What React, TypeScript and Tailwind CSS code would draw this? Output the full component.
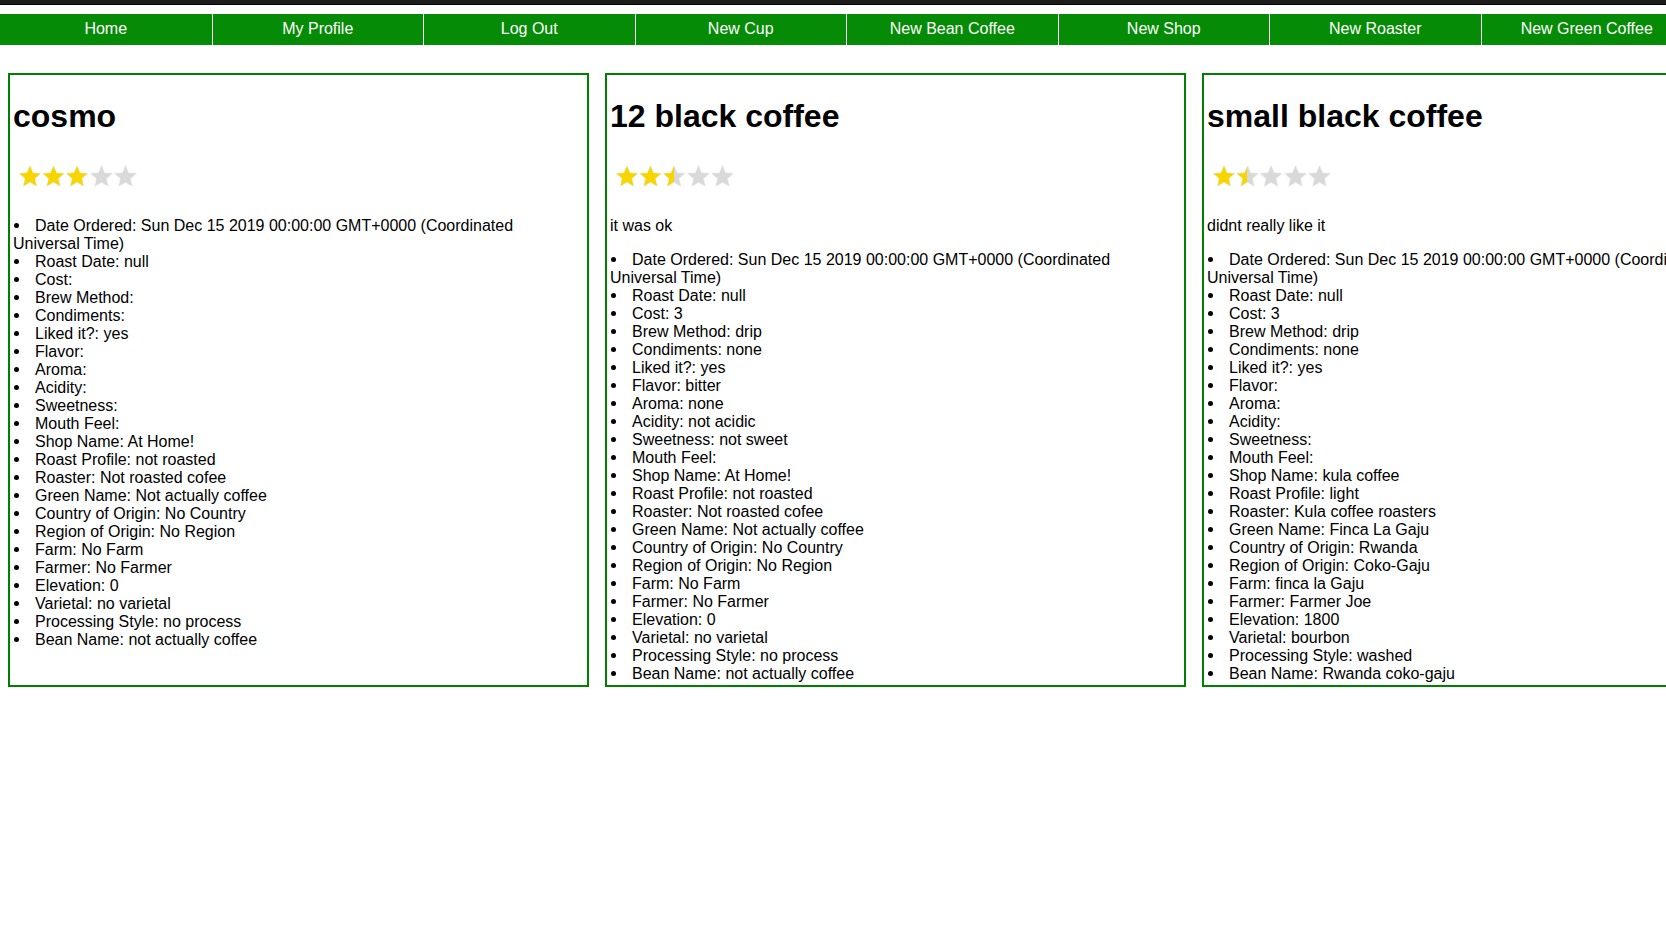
import { useId } from 'react';

type Cup = {
  title: string;
  rating: number;
  notes: string;
  details: string[];
};

const dateOrdered = 'Date Ordered: Sun Dec 15 2019 00:00:00 GMT+0000 (Coordinated Universal Time)';

const cups: Cup[] = [
  {
    title: 'cosmo',
    rating: 3,
    notes: '',
    details: [
      dateOrdered,
      'Roast Date: null',
      'Cost:',
      'Brew Method:',
      'Condiments:',
      'Liked it?: yes',
      'Flavor:',
      'Aroma:',
      'Acidity:',
      'Sweetness:',
      'Mouth Feel:',
      'Shop Name: At Home!',
      'Roast Profile: not roasted',
      'Roaster: Not roasted cofee',
      'Green Name: Not actually coffee',
      'Country of Origin: No Country',
      'Region of Origin: No Region',
      'Farm: No Farm',
      'Farmer: No Farmer',
      'Elevation: 0',
      'Varietal: no varietal',
      'Processing Style: no process',
      'Bean Name: not actually coffee',
    ],
  },
  {
    title: '12 black coffee',
    rating: 2.5,
    notes: 'it was ok',
    details: [
      dateOrdered,
      'Roast Date: null',
      'Cost: 3',
      'Brew Method: drip',
      'Condiments: none',
      'Liked it?: yes',
      'Flavor: bitter',
      'Aroma: none',
      'Acidity: not acidic',
      'Sweetness: not sweet',
      'Mouth Feel:',
      'Shop Name: At Home!',
      'Roast Profile: not roasted',
      'Roaster: Not roasted cofee',
      'Green Name: Not actually coffee',
      'Country of Origin: No Country',
      'Region of Origin: No Region',
      'Farm: No Farm',
      'Farmer: No Farmer',
      'Elevation: 0',
      'Varietal: no varietal',
      'Processing Style: no process',
      'Bean Name: not actually coffee',
    ],
  },
  {
    title: 'small black coffee',
    rating: 1.5,
    notes: 'didnt really like it',
    details: [
      dateOrdered,
      'Roast Date: null',
      'Cost: 3',
      'Brew Method: drip',
      'Condiments: none',
      'Liked it?: yes',
      'Flavor:',
      'Aroma:',
      'Acidity:',
      'Sweetness:',
      'Mouth Feel:',
      'Shop Name: kula coffee',
      'Roast Profile: light',
      'Roaster: Kula coffee roasters',
      'Green Name: Finca La Gaju',
      'Country of Origin: Rwanda',
      'Region of Origin: Coko-Gaju',
      'Farm: finca la Gaju',
      'Farmer: Farmer Joe',
      'Elevation: 1800',
      'Varietal: bourbon',
      'Processing Style: washed',
      'Bean Name: Rwanda coko-gaju',
    ],
  },
];

const navLinks = ['Home', 'My Profile', 'Log Out', 'New Cup', 'New Bean Coffee', 'New Shop', 'New Roaster', 'New Green Coffee'];

function starPoints(cx: number, cy: number, R: number, r: number) {
  const pts: string[] = [];
  for (let i = 0; i < 10; i++) {
    const rad = i % 2 === 0 ? R : r;
    const a = (Math.PI / 5) * i - Math.PI / 2;
    pts.push(`${(cx + rad * Math.cos(a)).toFixed(2)},${(cy + rad * Math.sin(a)).toFixed(2)}`);
  }
  return pts.join(' ');
}

function Stars({ rating }: { rating: number }) {
  const id = useId().replace(/:/g, '');
  const centers = [17, 40.5, 64, 88.5, 112.5];
  return (
    <svg width="130" height="41" viewBox="0 0 130 41" className="block">
      <defs>
        <linearGradient id={`half${id}`} x1="0" x2="1" y1="0" y2="0">
          <stop offset="50%" stopColor="#f7d600" />
          <stop offset="50%" stopColor="#d9d9d9" />
        </linearGradient>
      </defs>
      {centers.map((cx, i) => {
        const fill = rating >= i + 1 ? '#f7d600' : rating > i ? `url(#half${id})` : '#d9d9d9';
        return (
          <polygon
            key={i}
            points={starPoints(cx, 21, 11, 5)}
            fill={fill}
            stroke="#efefef"
            strokeWidth="1.5"
            strokeLinejoin="round"
            paintOrder="stroke"
          />
        );
      })}
    </svg>
  );
}

function CupCard({ cup }: { cup: Cup }) {
  return (
    <div className="h-[614px] w-[581px] shrink-0 border-2 border-[#008000] pt-[2px] pl-[3px] pr-[7px]">
      <h1 className="mt-[21.44px] mb-[20.44px] text-[32px] leading-[37px] font-bold">{cup.title}</h1>
      <div className="h-[45px]">
        <Stars rating={cup.rating} />
      </div>
      <p className="my-4 leading-[18px]">{cup.notes}</p>
      <ul className="my-4 leading-[18px]">
        {cup.details.map((d, i) => (
          <li key={i}>
            <span className="mr-[16px] mb-[3px] ml-px inline-block size-[5px] rounded-full bg-black" />
            {d}
          </li>
        ))}
      </ul>
    </div>
  );
}

export default function App() {
  return (
    <div className="min-h-[937px] w-full overflow-hidden bg-white font-['Liberation_Sans',Arial,sans-serif] text-base text-black">
      <div className="h-[5px] border-b border-black bg-[#1c1c1c]" />
      <nav className="mt-[9px] flex">
        {navLinks.map((link) => (
          <a
            key={link}
            className="h-[31px] w-[211.5px] shrink-0 cursor-pointer border-l border-white bg-[#058b05] pt-[5.5px] text-center leading-[18px] text-white first:border-l-0"
          >
            {link}
          </a>
        ))}
      </nav>
      <div className="mt-[28px] flex gap-4 pl-2">
        {cups.map((cup) => (
          <CupCard key={cup.title} cup={cup} />
        ))}
      </div>
    </div>
  );
}
